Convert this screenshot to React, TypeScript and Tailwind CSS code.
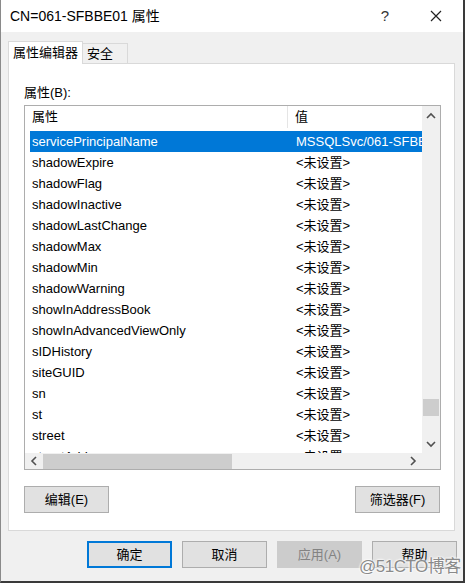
import React from 'react';

const FONT = { fontFamily: '"Liberation Sans", "Noto Sans CJK SC", sans-serif' };

const rows: [string, string][] = [
  ['servicePrincipalName', 'MSSQLSvc/061-SFBBE01.contoso.com:1433'],
  ['shadowExpire', '<未设置>'],
  ['shadowFlag', '<未设置>'],
  ['shadowInactive', '<未设置>'],
  ['shadowLastChange', '<未设置>'],
  ['shadowMax', '<未设置>'],
  ['shadowMin', '<未设置>'],
  ['shadowWarning', '<未设置>'],
  ['showInAddressBook', '<未设置>'],
  ['showInAdvancedViewOnly', '<未设置>'],
  ['sIDHistory', '<未设置>'],
  ['siteGUID', '<未设置>'],
  ['sn', '<未设置>'],
  ['st', '<未设置>'],
  ['street', '<未设置>'],
  ['streetAddress', '<未设置>'],
];

const Chevron = ({ dir }: { dir: 'up' | 'down' | 'left' | 'right' }) => {
  const pts = {
    up: '1,6 5,2 9,6',
    down: '1,2 5,6 9,2',
    left: '6,1 2,5 6,9',
    right: '2,1 6,5 2,9',
  }[dir];
  const vertical = dir === 'up' || dir === 'down';
  return (
    <svg width={vertical ? 10 : 8} height={vertical ? 8 : 10} viewBox={vertical ? '0 0 10 8' : '0 0 8 10'}>
      <polyline points={pts} fill="none" stroke="#505050" strokeWidth="1.6" />
    </svg>
  );
};

const Btn = ({ label, primary, disabled }: { label: string; primary?: boolean; disabled?: boolean }) => (
  <div
    className={`w-[85px] h-[27px] flex items-center justify-center text-[13px] ${
      primary
        ? 'border-2 border-[#0078d7] bg-[#e1e1e1] text-black'
        : disabled
        ? 'border border-[#cccccc] bg-[#cccccc] text-[#838383]'
        : 'border border-[#adadad] bg-[#e1e1e1] text-black'
    }`}
  >
    {label}
  </div>
);

export default function App() {
  return (
    <div className="w-[469px] h-[585px] bg-white relative overflow-hidden" style={FONT}>
      <div className="w-[465px] h-[583px] flex flex-col border-l border-l-[#8a8a8a] border-r-2 border-r-[#3a3a3a] border-b-2 border-b-[#3a3a3a]">
        {/* 标题栏 */}
        <div className="h-[32px] bg-white flex items-center pl-[9px] shrink-0">
          <span className="text-[14px] text-black flex-1">CN=061-SFBBE01 属性</span>
          <span className="text-[15px] text-[#333] w-[20px] text-center">?</span>
          <div className="w-[46px] flex justify-center ml-[18px] mr-[4px]">
            <svg width="12" height="12" viewBox="0 0 12 12">
              <path d="M1 1L11 11M11 1L1 11" stroke="#222" strokeWidth="1.2" />
            </svg>
          </div>
        </div>

        {/* 主体 */}
        <div className="flex-1 bg-[#f0f0f0] pl-[7px] pt-[9px] flex flex-col">
          <div className="flex items-end h-[22px] relative z-10">
            <div className="h-[23px] w-[75px] bg-white border border-[#d9d9d9] border-b-0 flex items-center justify-center text-[13px] text-black -mb-px">
              属性编辑器
            </div>
            <div className="h-[20px] w-[45px] bg-[#f0f0f0] border border-[#d9d9d9] border-l-0 border-b-0 flex items-center pl-[4px] text-[13px] text-black">
              安全
            </div>
          </div>

          <div className="w-[447px] h-[468px] bg-white border border-[#d9d9d9] pl-[15px] flex flex-col">
            <div className="text-[13px] text-black mt-[20px] h-[18px] leading-[18px]">属性(B):</div>

            <div className="mt-[3px] w-[417px] h-[365px] border border-[#adadad] flex flex-col">
              <div className="flex flex-1 min-h-0">
                <div className="flex-1 min-w-0 overflow-hidden">
                  <div className="h-[22px] flex items-center text-[13px] text-black">
                    <div className="w-[263px] shrink-0 pl-[7px] border-r border-[#e5e5e5] h-full flex items-center">属性</div>
                    <div className="pl-[7px]">值</div>
                  </div>
                  <div className="pt-[3px] pl-[5px]">
                    {rows.map(([name, val], i) => (
                      <div
                        key={name}
                        className={`h-[21px] flex items-center text-[13px] whitespace-nowrap ${
                          i === 0 ? 'bg-[#0078d7] text-white' : 'text-black'
                        }`}
                      >
                        <div className="w-[265px] shrink-0 pl-[2px] overflow-hidden">{name}</div>
                        <div className="pl-[1px] shrink-0">{val}</div>
                      </div>
                    ))}
                  </div>
                </div>
                {/* 垂直滚动条 */}
                <div className="w-[18px] bg-[#f0f0f0] flex flex-col items-center">
                  <div className="h-[18px] flex items-center justify-center mt-[1px]">
                    <Chevron dir="up" />
                  </div>
                  <div className="flex-1 w-full relative">
                    <div className="absolute left-[1px] right-[1px] top-[274px] h-[17px] bg-[#cdcdcd]" />
                  </div>
                  <div className="h-[18px] flex items-center justify-center">
                    <Chevron dir="down" />
                  </div>
                </div>
              </div>
              {/* 水平滚动条 */}
              <div className="h-[16px] flex shrink-0">
                <div className="flex-1 bg-[#f0f0f0] flex items-center">
                  <div className="w-[18px] flex justify-center">
                    <Chevron dir="left" />
                  </div>
                  <div className="w-[189px] h-[15px] bg-[#cdcdcd]" />
                  <div className="flex-1" />
                  <div className="w-[18px] flex justify-center">
                    <Chevron dir="right" />
                  </div>
                </div>
                <div className="w-[18px] bg-[#f0f0f0]" />
              </div>
            </div>

            <div className="mt-[16px] w-[416px] flex justify-between">
              <Btn label="编辑(E)" />
              <Btn label="筛选器(F)" />
            </div>
          </div>

          <div className="mt-[10px] flex gap-[10px] pl-[79px]">
            <Btn label="确定" primary />
            <Btn label="取消" />
            <Btn label="应用(A)" disabled />
            <Btn label="帮助" />
          </div>
        </div>
      </div>

      {/* 水印 */}
      <div className="absolute left-[359px] top-[554px] text-[17px] text-[#8a8a8a] [text-shadow:0_0_2px_#fff,0_0_2px_#fff,0_0_3px_#fff] tracking-[-0.5px]">
        @51CTO博客
      </div>
    </div>
  );
}
